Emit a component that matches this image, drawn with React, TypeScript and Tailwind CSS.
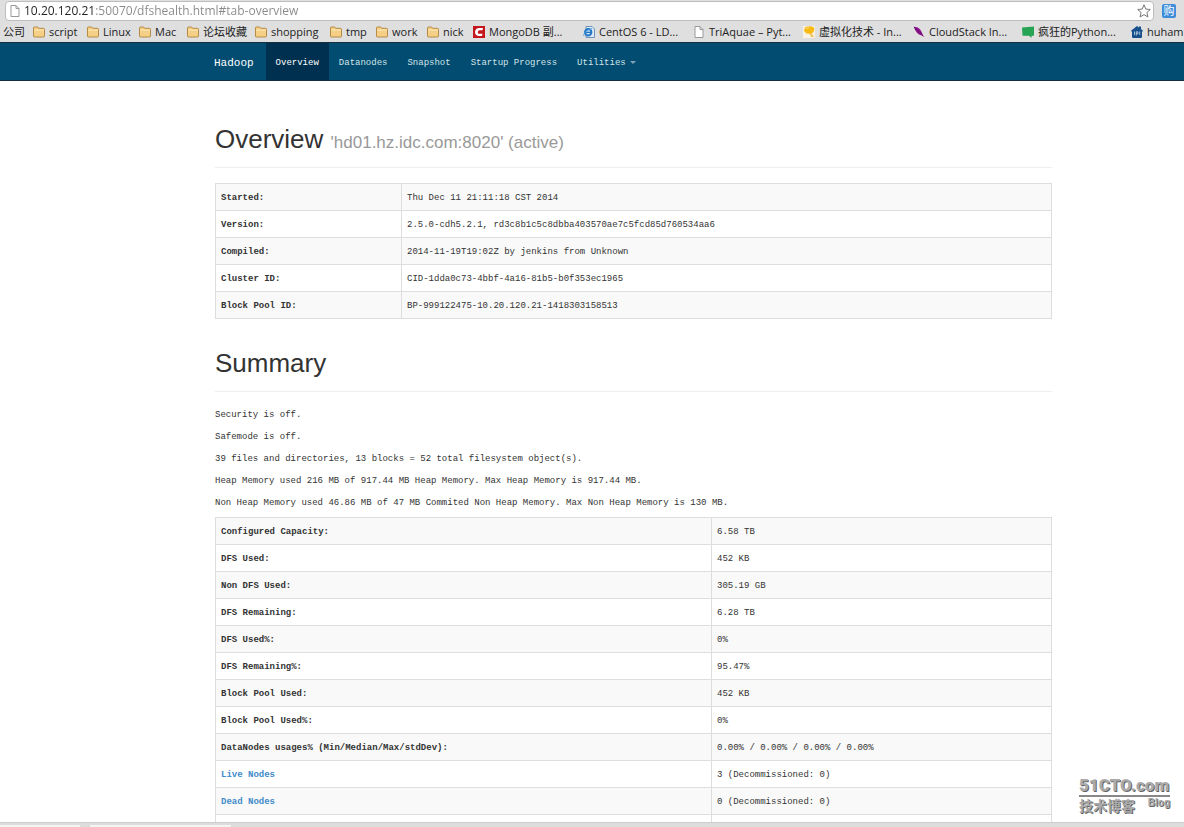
import { ReactNode } from "react";

type Row = { label: string; value: string; href?: string };
type Bookmark = { label: string; width: string; icon: ReactNode };

const overviewRows: Row[] = [
  { label: "Started:", value: "Thu Dec 11 21:11:18 CST 2014" },
  { label: "Version:", value: "2.5.0-cdh5.2.1, rd3c8b1c5c8dbba403570ae7c5fcd85d760534aa6" },
  { label: "Compiled:", value: "2014-11-19T19:02Z by jenkins from Unknown" },
  { label: "Cluster ID:", value: "CID-1dda0c73-4bbf-4a16-81b5-b0f353ec1965" },
  { label: "Block Pool ID:", value: "BP-999122475-10.20.120.21-1418303158513" },
];

const summaryLines = [
  "Security is off.",
  "Safemode is off.",
  "39 files and directories, 13 blocks = 52 total filesystem object(s).",
  "Heap Memory used 216 MB of 917.44 MB Heap Memory. Max Heap Memory is 917.44 MB.",
  "Non Heap Memory used 46.86 MB of 47 MB Commited Non Heap Memory. Max Non Heap Memory is 130 MB.",
];

const summaryRows: Row[] = [
  { label: "Configured Capacity:", value: "6.58 TB" },
  { label: "DFS Used:", value: "452 KB" },
  { label: "Non DFS Used:", value: "305.19 GB" },
  { label: "DFS Remaining:", value: "6.28 TB" },
  { label: "DFS Used%:", value: "0%" },
  { label: "DFS Remaining%:", value: "95.47%" },
  { label: "Block Pool Used:", value: "452 KB" },
  { label: "Block Pool Used%:", value: "0%" },
  { label: "DataNodes usages% (Min/Median/Max/stdDev):", value: "0.00% / 0.00% / 0.00% / 0.00%" },
  { label: "Live Nodes", value: "3 (Decommissioned: 0)", href: "#live" },
  { label: "Dead Nodes", value: "0 (Decommissioned: 0)", href: "#dead" },
  { label: "", value: "" },
];

function FolderIcon() {
  return (
    <svg className="h-3 w-3 shrink-0" viewBox="0 0 12 12">
      <path d="M.5 10V2q0-1 1-1h3.2l1 1.3h4.8q1 0 1 1V10q0 1-1 1h-9q-1 0-1-1z" fill="#f6cf86" stroke="#b58a45" />
      <path d="M1.2 3.6h9.6v1H1.2z" fill="#fdeaba" />
    </svg>
  );
}

function PageIcon() {
  return (
    <svg className="h-3 w-3 shrink-0" viewBox="0 0 12 12">
      <path d="M2 .5h5l3 3v8H2z" fill="#fff" stroke="#999" />
      <path d="M7 .5v3h3" fill="none" stroke="#999" />
    </svg>
  );
}

function CsdnIcon() {
  return (
    <svg className="h-3 w-3 shrink-0" viewBox="0 0 12 12">
      <path d="M0 0h12v12H0z" fill="#c4161c" />
      <path d="M10 2H5.5Q2.3 2.4 2 6q0 3.6 3.5 4H9l.5-2.2H6Q4.7 7.7 4.8 6.2 5 4.3 6.5 4.2h3z" fill="#fff" />
    </svg>
  );
}

function IeIcon() {
  return (
    <svg className="h-3 w-3 shrink-0" viewBox="0 0 12 12">
      <path d="M3 .5h6l2.5 2.5v8.5H3z" fill="#dceaf7" stroke="#6f93b8" />
      <circle cx="5.2" cy="6.3" r="3.2" fill="#cfe6fa" stroke="#2877c4" strokeWidth="2" />
      <path d="M2.5 6.4h5.8" stroke="#2877c4" strokeWidth="1.4" />
      <path d="M.6 9.8Q1 5 9 2.5" fill="none" stroke="#4b9be0" strokeWidth=".9" />
    </svg>
  );
}

function CupIcon() {
  return (
    <svg className="h-3 w-3 shrink-0" viewBox="0 0 12 12">
      <path d="M0 0h12v12H0z" fill="#f8f3e4" />
      <path d="M2 1.2Q6-.5 10 .8l1.5 1.7L10.5 6 8 8 3.5 7.5 1 5z" fill="#f7b914" />
      <path d="M6.5 8l2.5-.5 2 3.3-2.5.7z" fill="#efc766" />
      <path d="M3 2.5l3-1" stroke="#fde38b" />
    </svg>
  );
}

function FeatherIcon() {
  return (
    <svg className="h-3 w-3 shrink-0" viewBox="0 0 12 12">
      <path d="M.8.8Q5 .8 7.5 4 9.3 6.5 9.7 8.8L11.5 11.2 8.7 9.5Q3 8.3.8.8z" fill="#8d148d" />
      <path d="M1 1l9 8.5" stroke="#5b0a62" strokeWidth=".8" />
    </svg>
  );
}

function GreenNoteIcon() {
  return (
    <svg className="h-3 w-3 shrink-0" viewBox="0 0 12 12">
      <path d="M0 1.5L12 .5v9.2H9.5V12L7 9.7H.5z" fill="#27a354" />
    </svg>
  );
}

function HouseIcon() {
  return (
    <svg className="h-3 w-3 shrink-0" viewBox="0 0 12 12">
      <path d="M6 0l2 1.5V.5h2v2.6l2 1.7-1 1.2v5q0 1-1 1H2q-1 0-1-1V6L0 4.8z" fill="#17508a" />
      <path d="M3.5 5.5v3.5M8.7 5.5v3.5M5.3 9.5V5.8h1.6v2H5.3" fill="none" stroke="#dbe9f5" strokeWidth=".7" />
    </svg>
  );
}

const bookmarks: Bookmark[] = [
  { label: "script", width: "w-[54px]", icon: <FolderIcon /> },
  { label: "Linux", width: "w-[52px]", icon: <FolderIcon /> },
  { label: "Mac", width: "w-[48px]", icon: <FolderIcon /> },
  { label: "论坛收藏", width: "w-[68px]", icon: <FolderIcon /> },
  { label: "shopping", width: "w-[75px]", icon: <FolderIcon /> },
  { label: "tmp", width: "w-[46px]", icon: <FolderIcon /> },
  { label: "work", width: "w-[51px]", icon: <FolderIcon /> },
  { label: "nick", width: "w-[46px]", icon: <FolderIcon /> },
  { label: "MongoDB 副...", width: "w-[110px]", icon: <CsdnIcon /> },
  { label: "CentOS 6 - LD...", width: "w-[110px]", icon: <IeIcon /> },
  { label: "TriAquae – Pyt...", width: "w-[110px]", icon: <PageIcon /> },
  { label: "虚拟化技术 - In...", width: "w-[110px]", icon: <CupIcon /> },
  { label: "CloudStack In...", width: "w-[109px]", icon: <FeatherIcon /> },
  { label: "疯狂的Python...", width: "w-[109px]", icon: <GreenNoteIcon /> },
  { label: "huham", width: "w-[60px]", icon: <HouseIcon /> },
];

function BrowserBar() {
  return (
    <div className="shrink-0 overflow-hidden bg-[#dfdfdf] font-['Open_Sans','Noto_Sans_CJK_SC',sans-serif] text-[#222]">
      <div className="flex h-[21px] items-center gap-2 pr-2 pl-[5px]">
        <div className="flex h-5 flex-1 items-center gap-[3px] rounded-sm border border-[#bdbdbd] bg-white pr-0.5 pl-[3px]">
          <PageIcon />
          <input
            type="text"
            aria-label="Address"
            defaultValue="10.20.120.21:50070/dfshealth.html#tab-overview"
            className="h-4 min-w-0 flex-1 bg-[linear-gradient(90deg,#222_71px,#888_71px)] bg-clip-text text-[12px] leading-4 text-transparent outline-none"
          />
          <button aria-label="Bookmark this page">
            <svg className="h-3.5 w-3.5" viewBox="0 0 14 14">
              <path d="M7 .8l1.8 4.3 4.5.4-3.4 3 1 4.5L7 10.6 3.1 13l1-4.5-3.4-3 4.5-.4z" fill="#fff" stroke="#777" />
            </svg>
          </button>
        </div>
        <button className="h-3.5 w-3.5 rounded-xs bg-[#3d8ddb] text-center text-[11px] leading-[13px] text-white">购</button>
      </div>
      <nav className="flex h-[21px] items-center text-[11px] leading-4 whitespace-nowrap">
        <a href="#company" className="w-[33px] shrink-0 pl-[3px]">公司</a>
        {bookmarks.map((b) => (
          <a key={b.label} href="#bookmark" className={`flex shrink-0 items-center gap-1 ${b.width}`}>
            {b.icon}
            {b.label}
          </a>
        ))}
      </nav>
    </div>
  );
}

function Navbar() {
  const links = ["Overview", "Datanodes", "Snapshot", "Startup Progress"];
  return (
    <header className="flex h-[39px] shrink-0 border-y border-[#12303f] bg-[#014c70] pl-[214px] text-[#d3e3e8]">
      <a href="#home" className="flex items-center pt-0.5 pr-3 text-[11px] text-white">Hadoop</a>
      <nav className="flex">
        {links.map((link) => (
          <a
            key={link}
            href="#tab"
            className={`flex items-center px-[10px] pt-0.5 ${link === "Overview" ? "bg-[#00304f] text-white" : ""}`}
          >
            {link}
          </a>
        ))}
        <button className="flex items-center gap-1 px-[10px] pt-0.5">
          Utilities
          <span className="border-x-[3px] border-t-[3px] border-x-transparent border-t-[#7fa3b3]" />
        </button>
      </nav>
    </header>
  );
}

function DataTable({ rows, labelWidth }: { rows: Row[]; labelWidth: string }) {
  return (
    <table className="w-full table-fixed border-collapse border border-[#ddd]">
      <tbody>
        {rows.map((row, i) => (
          <tr key={i} className="h-[27px] odd:bg-[#f9f9f9]">
            <th scope="row" className={`border border-[#ddd] px-[5px] pt-0.5 text-left font-bold ${labelWidth}`}>
              {row.href ? <a href={row.href} className="text-[#428bca]">{row.label}</a> : row.label}
            </th>
            <td className="border border-[#ddd] px-[5px] pt-0.5">{row.value}</td>
          </tr>
        ))}
      </tbody>
    </table>
  );
}

function Watermark() {
  return (
    <div className="absolute right-[14px] bottom-[7px] w-[91px] text-[#aaa] [text-shadow:1px_1px_0_#666]">
      <div className="border-b-2 border-[#888] font-['Roboto','Liberation_Sans',sans-serif] text-[17px] leading-5 font-black">
        51CTO.com
      </div>
      <div className="flex justify-between font-['Liberation_Sans','Noto_Sans_CJK_SC',sans-serif] font-bold">
        <span className="text-[14px] leading-[18px]">技术博客</span>
        <span className="text-[10px] leading-3">Blog</span>
      </div>
    </div>
  );
}

export default function App() {
  return (
    <div className="flex h-screen flex-col overflow-hidden bg-white font-['Liberation_Mono',monospace] text-[9px] leading-3 text-[#333]">
      <BrowserBar />
      <Navbar />
      <main className="relative min-h-0 flex-1 overflow-hidden pr-[132px] pl-[215px]">
        <h1 className="mt-10 mb-[15px] border-b border-[#eee] pb-[10px] font-['Liberation_Sans',sans-serif] text-[26px] leading-9">
          Overview <small className="text-[17px] leading-none text-[#999]">'hd01.hz.idc.com:8020' (active)</small>
        </h1>
        <DataTable rows={overviewRows} labelWidth="w-[186px]" />
        <h1 className="mt-[26px] mb-[17px] border-b border-[#eee] pb-[10px] font-['Liberation_Sans',sans-serif] text-[26px] leading-9">
          Summary
        </h1>
        <div className="mb-2 flex flex-col gap-[10px]">
          {summaryLines.map((line) => (
            <p key={line}>{line}</p>
          ))}
        </div>
        <DataTable rows={summaryRows} labelWidth="w-[496px]" />
        <Watermark />
      </main>
      <footer className="flex h-[5px] shrink-0 items-end gap-2.5 border-t border-[#ccc] bg-[#ddd]">
        <span className="h-0.5 w-20 bg-[#f4f4f4]" />
        <span className="h-0.5 w-[141px] bg-[#f4f4f4]" />
      </footer>
    </div>
  );
}
